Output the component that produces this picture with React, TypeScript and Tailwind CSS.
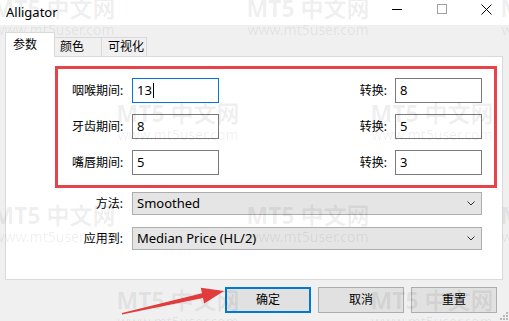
import React from 'react'

const font = "font-['Noto_Sans','Noto_Sans_CJK_SC',sans-serif]"

const Field = ({ value, focused }: { value: string; focused?: boolean }) => (
  <div
    className={`flex h-[25px] w-[87px] items-center border bg-white pl-[4px] text-[13px] ${
      focused ? 'border-[#0078d7]' : 'border-[#7a7a7a]'
    }`}
  >
    <span>{value}</span>
    {focused && <span className="ml-[1px] h-[15px] w-[1px] bg-black" />}
  </div>
)

const Row = ({ label, a, b, focused }: { label: string; a: string; b: string; focused?: boolean }) => (
  <div className="flex h-[25px] items-center">
    <span className="w-[74px] pl-[14px] text-[12px]">{label}</span>
    <Field value={a} focused={focused} />
    <span className="ml-auto mr-[8px] text-[12px]">转换:</span>
    <div className="mr-[12px]">
      <Field value={b} />
    </div>
  </div>
)

const Combo = ({ label, value }: { label: string; value: string }) => (
  <div className="flex items-center">
    <span className="w-[126px] pr-[9px] text-right text-[12px]">{label}</span>
    <div className="flex h-[23px] w-[350px] items-center border border-[#adadad] bg-[#e5e5e5] pl-[4px] text-[13px]">
      <span>{value}</span>
      <svg className="ml-auto mr-[6px]" width="8" height="5" viewBox="0 0 8 5">
        <polyline points="0.5,0.5 4,4 7.5,0.5" fill="none" stroke="#333" strokeWidth="1" />
      </svg>
    </div>
  </div>
)

const Button = ({ label, focused, w }: { label: string; focused?: boolean; w: string }) => (
  <div
    className={`flex h-[26px] ${w} items-center justify-center bg-[#e1e1e1] text-[12px] ${
      focused ? 'border-2 border-[#0078d7]' : 'border border-[#adadad]'
    }`}
  >
    {label}
  </div>
)

const marks = [
  [-8, -6], [246, -6], [500, -6],
  [116, 99], [370, 99],
  [-8, 201], [246, 201], [500, 201],
  [116, 286], [370, 286],
]

export default function App() {
  return (
    <div className={`relative h-[321px] w-[509px] overflow-hidden bg-[#f0f0f0] text-black ${font}`}>
      {/* title bar */}
      <div className="flex h-[25px] items-center bg-white">
        <span className="pl-[6px] text-[13px]">Alligator</span>
        <div className="ml-auto flex h-full pb-[7px]">
          <div className="flex w-[45px] items-center justify-center">
            <div className="h-[1px] w-[10px] bg-black" />
          </div>
          <div className="flex w-[45px] items-center justify-center">
            <div className="h-[10px] w-[10px] border border-[#a0a0a0]" />
          </div>
          <div className="flex w-[45px] items-center justify-center">
            <svg width="11" height="11" viewBox="0 0 11 11">
              <path d="M0.5 0.5 L10.5 10.5 M10.5 0.5 L0.5 10.5" stroke="#000" strokeWidth="1" />
            </svg>
          </div>
        </div>
      </div>

      <div className="px-[5px]">
        {/* tabs */}
        <div className="flex h-[31px] items-end">
          <div className="relative z-10 -mb-[1px] flex h-[25px] w-[50px] items-center border border-b-0 border-[#d9d9d9] bg-white pl-[7px] text-[12px]">
            参数
          </div>
          <div className="flex h-[19px] w-[47px] items-center border border-l-0 border-b-0 border-[#d9d9d9] pl-[5px] text-[12px]">
            颜色
          </div>
          <div className="flex h-[19px] w-[45px] items-center border border-l-0 border-b-0 border-[#d9d9d9] pl-[6px] text-[12px]">
            可视化
          </div>
        </div>

        {/* panel */}
        <div className="h-[224px] w-[498px] border border-[#d9d9d9] bg-white pl-[49px] pt-[9px]">
          <div className="flex h-[122px] w-[442px] flex-col gap-[11px] border-[3px] border-[#e8434b] pt-[9px]">
            <Row label="咽喉期间:" a="13" b="8" focused />
            <Row label="牙齿期间:" a="8" b="5" />
            <Row label="嘴唇期间:" a="5" b="3" />
          </div>
          <div className="-ml-[49px] mt-[4px] flex flex-col gap-[12px]">
            <Combo label="方法:" value="Smoothed" />
            <Combo label="应用到:" value="Median Price (HL/2)" />
          </div>
        </div>

        {/* buttons */}
        <div className="mt-[7px] flex justify-end gap-[7px] pr-[7px]">
          <Button label="确定" focused w="w-[86px]" />
          <Button label="取消" w="w-[86px]" />
          <Button label="重置" w="w-[86px]" />
        </div>
      </div>

      {/* resize grip */}
      <svg className="absolute bottom-[1px] right-[1px]" width="9" height="9" viewBox="0 0 9 9">
        <rect x="7" y="1" width="2" height="2" fill="#b8b8b8" />
        <rect x="4" y="4" width="2" height="2" fill="#b8b8b8" />
        <rect x="7" y="4" width="2" height="2" fill="#b8b8b8" />
        <rect x="1" y="7" width="2" height="2" fill="#b8b8b8" />
        <rect x="4" y="7" width="2" height="2" fill="#b8b8b8" />
        <rect x="7" y="7" width="2" height="2" fill="#b8b8b8" />
      </svg>

      {/* watermark */}
      {marks.map(([x, y], i) => (
        <div
          key={i}
          className="pointer-events-none absolute flex w-[124px] flex-col items-center text-black/[0.07]"
          style={{ left: x, top: y }}
        >
          <span className="text-[23px] font-bold leading-[28px]">MT5 中文网</span>
          <span className="text-[14px] leading-[16px]">www.mt5user.com</span>
        </div>
      ))}

      {/* red arrow */}
      <svg className="pointer-events-none absolute left-0 top-0" width="509" height="321">
        <polygon
          points="122,313 202,293.2 200.8,287.8 224,291 204.2,303.4 203,298 122,314.5"
          fill="#e23b3b"
        />
      </svg>
    </div>
  )
}
